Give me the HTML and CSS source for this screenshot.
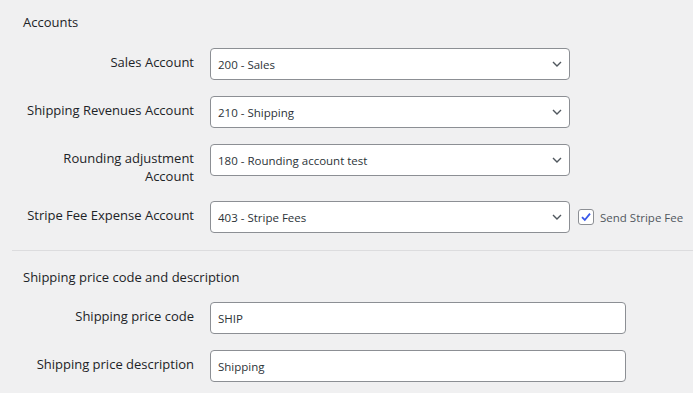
FILE: index.html
```html
<!DOCTYPE html>
<html lang="en">
<head>
  <meta charset="UTF-8">
  <title>Accounts settings</title>
  <link rel="stylesheet" href="styles.css">
</head>
<body>
  <main class="settings">

    <section class="group">
      <h2 class="group-title">Accounts</h2>

      <div class="form-rows">
        <label class="row-label" for="sales">Sales Account</label>
        <div class="row-field">
          <div class="select-wrap">
            <select id="sales" class="select">
              <option>200 - Sales</option>
            </select>
            <svg class="chevron" width="10" height="6" viewBox="0 0 10 6"><path d="M1 1 L5 5 L9 1" fill="none" stroke="#50575e" stroke-width="1.4"/></svg>
          </div>
        </div>

        <label class="row-label" for="shipping">Shipping Revenues Account</label>
        <div class="row-field">
          <div class="select-wrap">
            <select id="shipping" class="select">
              <option>210 - Shipping</option>
            </select>
            <svg class="chevron" width="10" height="6" viewBox="0 0 10 6"><path d="M1 1 L5 5 L9 1" fill="none" stroke="#50575e" stroke-width="1.4"/></svg>
          </div>
        </div>

        <label class="row-label" for="rounding">Rounding adjustment<br>Account</label>
        <div class="row-field">
          <div class="select-wrap">
            <select id="rounding" class="select">
              <option>180 - Rounding account test</option>
            </select>
            <svg class="chevron" width="10" height="6" viewBox="0 0 10 6"><path d="M1 1 L5 5 L9 1" fill="none" stroke="#50575e" stroke-width="1.4"/></svg>
          </div>
        </div>

        <label class="row-label" for="stripe">Stripe Fee Expense Account</label>
        <div class="row-field">
          <div class="select-wrap">
            <select id="stripe" class="select">
              <option>403 - Stripe Fees</option>
            </select>
            <svg class="chevron" width="10" height="6" viewBox="0 0 10 6"><path d="M1 1 L5 5 L9 1" fill="none" stroke="#50575e" stroke-width="1.4"/></svg>
          </div>
          <label class="check">
            <span class="check-box">
              <svg width="14" height="14" viewBox="0 0 14 14"><path d="M3 7.2 L5.8 10 L11 3.6" fill="none" stroke="#3858e9" stroke-width="1.8"/></svg>
            </span>
            Send Stripe Fee
          </label>
        </div>
      </div>
    </section>

    <hr class="divider">

    <section class="group">
      <h2 class="group-title group-title-tight">Shipping price code and description</h2>

      <div class="form-rows">
        <label class="row-label" for="ship-code">Shipping price code</label>
        <div class="row-field">
          <input id="ship-code" class="text-input" type="text" value="SHIP">
        </div>

        <label class="row-label" for="ship-desc">Shipping price description</label>
        <div class="row-field">
          <input id="ship-desc" class="text-input" type="text" value="Shipping">
        </div>
      </div>
    </section>

  </main>
</body>
</html>
```

FILE: styles.css
```css
/* Page */
body {
  margin: 0;
  background: #f0f0f1;
  color: #1d2327;
  font-family: "Open Sans", "Noto Sans", sans-serif;
}

.settings {
  padding: 13px 0 0 12px;
}

/* Section headings */
.group-title {
  margin: 0 0 17px 11px;
  font-size: 13px;
  line-height: 18px;
  font-weight: 500;
}

.group-title-tight {
  margin-bottom: 16px;
}

/* Label / field grid */
.form-rows {
  display: grid;
  grid-template-columns: 182px auto;
  column-gap: 16px;
  row-gap: 16px;
  align-items: start;
}

.row-label {
  padding-top: 5px;
  font-size: 13px;
  line-height: 18px;
  font-weight: 500;
  text-align: right;
}

.row-field {
  display: flex;
  align-items: center;
  gap: 8px;
}

/* Selects */
.select-wrap {
  position: relative;
  width: 360px;
}

.select {
  appearance: none;
  -webkit-appearance: none;
  width: 100%;
  height: 32px;
  margin: 0;
  padding: 0 30px 0 7px;
  border: 1px solid #8c8f94;
  border-radius: 4px;
  background: #fff;
  color: #2c3338;
  font-family: inherit;
  font-size: 11.5px;
}

.chevron {
  position: absolute;
  right: 8px;
  top: 13px;
  pointer-events: none;
}

/* Text inputs */
.text-input {
  box-sizing: border-box;
  width: 416px;
  height: 32px;
  margin: 0;
  padding: 0 7px;
  border: 1px solid #8c8f94;
  border-radius: 4px;
  background: #fff;
  color: #2c3338;
  font-family: inherit;
  font-size: 11.5px;
}

/* Checkbox */
.check {
  display: flex;
  align-items: center;
  gap: 6px;
  font-size: 11.5px;
  color: #50575e;
}

.check-box {
  display: flex;
  align-items: center;
  justify-content: center;
  width: 14px;
  height: 14px;
  border: 1px solid #8c8f94;
  border-radius: 3px;
  background: #fff;
}

/* Divider */
.divider {
  margin: 17px 0 17px 0;
  border: 0;
  border-top: 1px solid #dcdcde;
}
```
